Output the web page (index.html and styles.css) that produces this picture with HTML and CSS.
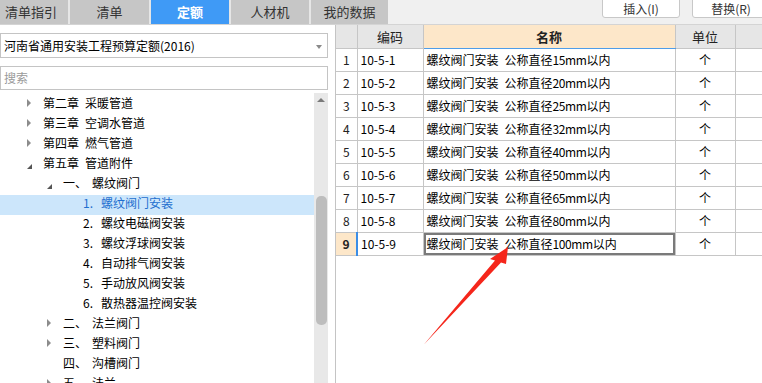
FILE: index.html
```html
<!DOCTYPE html>
<html lang="zh">
<head>
  <meta charset="UTF-8">
  <title>定额</title>
  <link rel="stylesheet" href="styles.css">
</head>
<body>
  <div class="topbar">
    <div class="tabs">
      <div class="tab tab-first">清单指引</div>
      <div class="tab w79">清单</div>
      <div class="tab active">定额</div>
      <div class="tab">人材机</div>
      <div class="tab w77">我的数据</div>
    </div>
    <div class="actions">
      <button class="btn">插入(I)</button>
      <button class="btn">替换(R)</button>
    </div>
  </div>

  <div class="main">
    <div class="side">
      <div class="select">河南省通用安装工程预算定额(2016)<span class="caret"></span></div>
      <div class="search">搜索</div>
      <div class="tree-wrap">
        <ul class="tree">
          <li class="lv1"><span class="tw closed"></span>第二章<span class="sp"></span>采暖管道</li>
          <li class="lv1"><span class="tw closed"></span>第三章<span class="sp"></span>空调水管道</li>
          <li class="lv1"><span class="tw closed"></span>第四章<span class="sp"></span>燃气管道</li>
          <li class="lv1"><span class="tw open"></span>第五章<span class="sp"></span>管道附件</li>
          <li class="lv2"><span class="tw open"></span><span class="ord">一、</span>螺纹阀门</li>
          <li class="lv3 selected"><span class="no">1.</span>螺纹阀门安装</li>
          <li class="lv3"><span class="no">2.</span>螺纹电磁阀安装</li>
          <li class="lv3"><span class="no">3.</span>螺纹浮球阀安装</li>
          <li class="lv3"><span class="no">4.</span>自动排气阀安装</li>
          <li class="lv3"><span class="no">5.</span>手动放风阀安装</li>
          <li class="lv3"><span class="no">6.</span>散热器温控阀安装</li>
          <li class="lv2"><span class="tw closed"></span><span class="ord">二、</span>法兰阀门</li>
          <li class="lv2"><span class="tw closed"></span><span class="ord">三、</span>塑料阀门</li>
          <li class="lv2"><span class="tw"></span><span class="ord">四、</span>沟槽阀门</li>
          <li class="lv2"><span class="tw closed"></span><span class="ord">五、</span>法兰</li>
        </ul>
        <div class="scrollbar">
          <span class="up"></span>
          <span class="thumb"></span>
        </div>
      </div>
    </div>

    <div class="grid">
      <table class="quota">
        <colgroup>
          <col class="c-num">
          <col class="c-code">
          <col class="c-name">
          <col class="c-unit">
          <col>
        </colgroup>
        <thead>
          <tr>
            <th></th>
            <th>编码</th>
            <th class="h-name">名称</th>
            <th>单位</th>
            <th></th>
          </tr>
        </thead>
        <tbody>
          <tr><td class="num">1</td><td class="code">10-5-1</td><td class="name">螺纹阀门安装<span class="sp"></span>公称直径<span class="sz">15mm</span>以内</td><td class="unit">个</td><td></td></tr>
          <tr><td class="num">2</td><td class="code">10-5-2</td><td class="name">螺纹阀门安装<span class="sp"></span>公称直径<span class="sz">20mm</span>以内</td><td class="unit">个</td><td></td></tr>
          <tr><td class="num">3</td><td class="code">10-5-3</td><td class="name">螺纹阀门安装<span class="sp"></span>公称直径<span class="sz">25mm</span>以内</td><td class="unit">个</td><td></td></tr>
          <tr><td class="num">4</td><td class="code">10-5-4</td><td class="name">螺纹阀门安装<span class="sp"></span>公称直径<span class="sz">32mm</span>以内</td><td class="unit">个</td><td></td></tr>
          <tr><td class="num">5</td><td class="code">10-5-5</td><td class="name">螺纹阀门安装<span class="sp"></span>公称直径<span class="sz">40mm</span>以内</td><td class="unit">个</td><td></td></tr>
          <tr><td class="num">6</td><td class="code">10-5-6</td><td class="name">螺纹阀门安装<span class="sp"></span>公称直径<span class="sz">50mm</span>以内</td><td class="unit">个</td><td></td></tr>
          <tr><td class="num">7</td><td class="code">10-5-7</td><td class="name">螺纹阀门安装<span class="sp"></span>公称直径<span class="sz">65mm</span>以内</td><td class="unit">个</td><td></td></tr>
          <tr><td class="num">8</td><td class="code">10-5-8</td><td class="name">螺纹阀门安装<span class="sp"></span>公称直径<span class="sz">80mm</span>以内</td><td class="unit">个</td><td></td></tr>
          <tr class="current"><td class="num">9</td><td class="code">10-5-9</td><td class="name">螺纹阀门安装<span class="sp"></span>公称直径<span class="sz">100mm</span>以内</td><td class="unit">个</td><td></td></tr>
        </tbody>
      </table>
    </div>
  </div>

  <!-- annotation arrow drawn over the screenshot -->
  <svg class="arrow" width="762" height="383" viewBox="0 0 762 383">
    <polygon points="423.5,345 495,260.6 490,259 508,247 506,264 501,262.4" fill="#f5261b"/>
  </svg>
</body>
</html>
```

FILE: styles.css
```css
* {
  box-sizing: border-box;
}

body {
  margin: 0;
  width: 762px;
  height: 383px;
  overflow: hidden;
  position: relative;
  background: #fff;
  font-family: "Noto Sans CJK SC", "Liberation Sans", sans-serif;
  font-size: 12px;
  color: #000;
}

/* top tabs */
.topbar {
  display: flex;
  height: 25px;
  background: #f0f0f0;
  border-bottom: 1px solid #d4d4d4;
  overflow: hidden;
}

.tabs {
  display: flex;
  gap: 2px;
  background: #e6e6e6;
}

.tab {
  width: 78px;
  height: 24px;
  line-height: 23px;
  text-align: center;
  background: #c6c6c6;
  color: #333;
  font-size: 13px;
}

.tab-first {
  width: 68px;
  text-align: left;
  padding-left: 5px;
}

.w79 {
  width: 79px;
}

.w77 {
  width: 77px;
}

.tab.active {
  background: #3f9af6;
  color: #fff;
  font-weight: bold;
}

.actions {
  display: flex;
  gap: 12px;
  margin-left: 214px;
}

.btn {
  width: 78px;
  height: 19px;
  margin-top: -1px;
  flex-shrink: 0;
  padding: 0;
  background: #fff;
  border: 1px solid #c8c8c8;
  border-radius: 0 0 3px 3px;
  font-family: inherit;
  font-size: 12px;
  line-height: 16px;
  color: #333;
}

/* layout */
.main {
  display: flex;
  height: 358px;
}

.side {
  width: 335px;
  flex-shrink: 0;
  padding-top: 8px;
  overflow: hidden;
}

.select,
.search {
  position: relative;
  width: 328px;
  border: 1px solid #c4c4c4;
  padding-left: 3px;
}

.select {
  height: 25px;
  line-height: 23px;
}

.caret {
  position: absolute;
  right: 5px;
  top: 11px;
  border-top: 4px solid #8a8a8a;
  border-left: 3px solid transparent;
  border-right: 3px solid transparent;
}

.search {
  margin-top: 8px;
  height: 24px;
  line-height: 22px;
  color: #9a9a9a;
}

.sp {
  display: inline-block;
  width: 6px;
}

/* tree */
.tree-wrap {
  display: flex;
  margin-top: 3px;
  height: 300px;
}

.tree {
  list-style: none;
  margin: 0;
  padding: 2px 0 0;
  width: 314px;
}

.tree li {
  display: flex;
  align-items: flex-start;
  height: 20px;
  line-height: 16px;
  white-space: nowrap;
}

.tree .lv1 {
  padding-left: 27px;
}

.tree .lv2 {
  padding-left: 47px;
}

.tree .lv3 {
  padding-left: 83px;
}

.tree li.selected {
  background: #cce6fb;
  color: #1f6fcf;
}

.tw {
  position: relative;
  width: 16px;
  height: 16px;
  flex-shrink: 0;
}

.tw.closed::before {
  content: "";
  position: absolute;
  left: 0;
  top: 4px;
  border-left: 4px solid #8c8c8c;
  border-top: 4px solid transparent;
  border-bottom: 4px solid transparent;
}

.tw.open::before {
  content: "";
  position: absolute;
  left: 0;
  top: 9px;
  border-bottom: 5px solid #555;
  border-left: 5px solid transparent;
}

.ord {
  width: 29px;
  flex-shrink: 0;
}

.no {
  width: 18px;
  flex-shrink: 0;
}

.scrollbar {
  position: relative;
  width: 14px;
  height: 300px;
  background: #e8e8e8;
}

.up {
  position: absolute;
  left: 3px;
  top: 5px;
  border-bottom: 4px solid #7a7a7a;
  border-left: 4px solid transparent;
  border-right: 4px solid transparent;
}

.thumb {
  position: absolute;
  left: 2px;
  top: 103px;
  width: 11px;
  height: 129px;
  border-radius: 5px;
  background: #bdbdbd;
}

/* table */
.grid {
  flex: 1;
  border-left: 1px solid #c4c4c4;
  overflow: hidden;
}

.quota {
  table-layout: fixed;
  width: 427px;
  border-collapse: collapse;
}

.c-num {
  width: 21px;
}

.c-code {
  width: 66px;
}

.c-name {
  width: 252px;
}

.c-unit {
  width: 60px;
}

.quota th,
.quota td {
  height: 23px;
  padding: 0;
  border: 1px solid #c6c6c6;
  white-space: nowrap;
  overflow: hidden;
}

.quota tr > :first-child {
  border-left: none;
}

.quota thead th {
  border-top: none;
  background: #e6e6e6;
  font-weight: normal;
  color: #222;
  font-size: 13px;
}

.quota th.h-name {
  background: #fde7c9;
  font-weight: bold;
  border-bottom: 1px solid #4f9de8;
}

.num {
  text-align: center;
  color: #222;
}

.code,
.name {
  padding-left: 3px !important;
}

.sz {
  letter-spacing: -0.4px;
}

.unit {
  text-align: center;
}

.current .num {
  background: #fde7c9;
  font-weight: bold;
}

.current .code {
  border-left: 2px solid #3b8de6;
}

.current .name {
  box-shadow: inset 0 0 0 2px #7a7a7a;
}

.arrow {
  position: absolute;
  left: 0;
  top: 0;
  pointer-events: none;
}
```
